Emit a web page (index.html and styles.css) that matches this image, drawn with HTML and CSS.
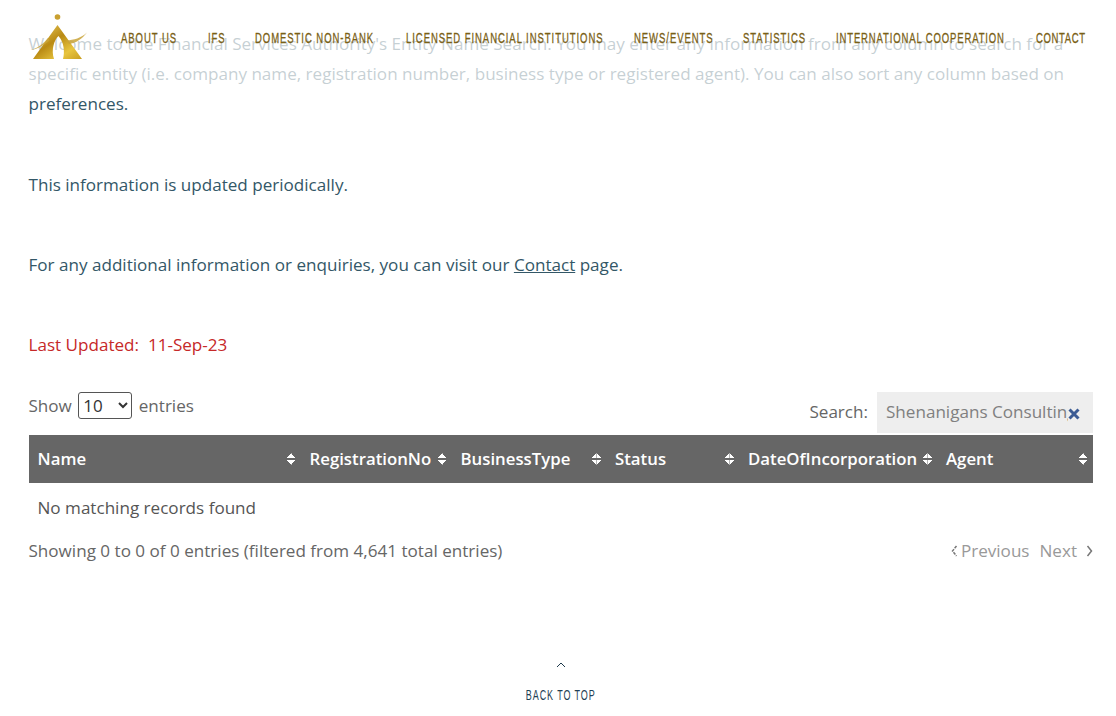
FILE: index.html
```html
<!DOCTYPE html>
<html lang="en">
<head>
<meta charset="utf-8">
<title>Entity Name Search</title>
<link rel="stylesheet" href="styles.css">
</head>
<body>
<header class="site-header">
  <a class="logo" href="#" aria-label="Financial Services Authority">
    <svg width="60" height="50" viewBox="0 0 60 50">
      <defs>
        <linearGradient id="gold" x1="0" y1="0" x2="1" y2="1">
          <stop offset="0" stop-color="#f3d668"/>
          <stop offset="0.45" stop-color="#b98a14"/>
          <stop offset="0.75" stop-color="#e8c53e"/>
          <stop offset="1" stop-color="#c99e20"/>
        </linearGradient>
      </defs>
      <circle cx="28.500" cy="5" r="2.800" fill="#c9a030"/>
      <path d="M28.500 13 L53 47 L34 47 C36 40 35 30 29.500 24 C25 28 22 38 25 47 L4 47 Z" fill="url(#gold)"/>
      <path d="M2 38 C9 36 15 31 19 26 L20.500 28.500 C15 33 9 37 2 38 Z" fill="#c9a338" opacity=".85"/>
      <path d="M58 20.500 C52 26 45 28 37 28.500 L40 32 C47 31 53 27 58 20.500 Z" fill="#c9a338" opacity=".85"/>
    </svg>
  </a>
  <nav class="main-nav">
    <a href="#">ABOUT US</a>
    <a href="#">IFS</a>
    <a href="#">DOMESTIC NON-BANK</a>
    <a href="#">LICENSED FINANCIAL INSTITUTIONS</a>
    <a href="#">NEWS/EVENTS</a>
    <a href="#">STATISTICS</a>
    <a href="#">INTERNATIONAL COOPERATION</a>
    <a href="#">CONTACT</a>
  </nav>
</header>
<main class="content">
  <p class="intro">Welcome to the Financial Services Authority's Entity Name Search. You may enter any information from any column to search for a specific entity (i.e. company name, registration number, business type or registered agent). You can also sort any column based on preferences.</p>
  <p class="note">This information is updated periodically.</p>
  <p class="note">For any additional information or enquiries, you can visit our <a href="#">Contact</a> page.</p>
  <p class="updated">Last Updated:&nbsp; 11-Sep-23</p>
  <div class="table-controls">
    <label class="length">Show
      <select><option>10</option><option>25</option><option>50</option></select>
      entries</label>
    <label class="search">Search:
      <span class="search-box"><span class="search-value">Shenanigans Consulting</span>
        <svg class="clear" width="12" height="12" viewBox="0 0 12 12"><path d="M1.500 1.500 L10.500 10.500 M10.500 1.500 L1.500 10.500" stroke="#3b5b94" stroke-width="3" fill="none"/></svg>
      </span>
    </label>
  </div>
  <table class="entities">
    <thead>
      <tr>
        <th>Name<span class="sort"></span></th>
        <th>RegistrationNo<span class="sort"></span></th>
        <th>BusinessType<span class="sort"></span></th>
        <th>Status<span class="sort"></span></th>
        <th>DateOfIncorporation<span class="sort"></span></th>
        <th>Agent<span class="sort"></span></th>
      </tr>
    </thead>
    <tbody>
      <tr><td colspan="6">No matching records found</td></tr>
    </tbody>
  </table>
  <div class="table-footer">
    <div>Showing 0 to 0 of 0 entries (filtered from 4,641 total entries)</div>
    <div class="pager">
      <svg width="7" height="12" viewBox="0 0 7 12"><path d="M5.500 1 L1.500 6 L5.500 11" fill="none" stroke="#777" stroke-width="1.500" stroke-dasharray="3 1"/></svg>
      <a href="#" class="prev">Previous</a>
      <a href="#" class="next">Next</a>
      <svg width="7" height="12" viewBox="0 0 7 12"><path d="M1.500 1 L5.500 6 L1.500 11" fill="none" stroke="#777" stroke-width="1.500"/></svg>
    </div>
  </div>
  <a class="back-top" href="#">
    <svg width="10" height="6" viewBox="0 0 10 6"><path d="M1 5 L5 1 L9 5" fill="none" stroke="#1e3a4c" stroke-width="1"/></svg>
    <span>BACK TO TOP</span>
  </a>
</main>
</body>
</html>
```
FILE: styles.css
```css
* { box-sizing: border-box; }
html, body { margin: 0; padding: 0; }
body {
  font-family: "Open Sans", "Liberation Sans", sans-serif;
  font-size: 17.08px;
  line-height: 30px;
  color: #335767;
  background: #fff;
  overflow: hidden;
}
.site-header {
  position: absolute;
  top: 0; left: 0; right: 0;
  height: 90px;
  background: rgba(255,255,255,.72);
  display: flex;
  align-items: flex-start;
}
.logo { display: block; margin: 12px 0 0 29px; width: 60px; height: 50px; }
.main-nav {
  position: absolute;
  top: 26px; left: 121px;
  display: flex;
  gap: 30px;
  font-family: "Liberation Sans", sans-serif;
  font-size: 9.500px;
  line-height: 24px;
  letter-spacing: .95px;
  white-space: nowrap;
}
.main-nav a {
  display: block;
  color: #7a5f16;
  text-decoration: none;
  -webkit-text-stroke: .2px #7a5f16;
  transform: scaleY(1.6);
}
.main-nav a:nth-child(1) { width: 57px; }
.main-nav a:nth-child(2) { width: 17px; }
.main-nav a:nth-child(3) { width: 121px; }
.main-nav a:nth-child(4) { width: 198px; }
.main-nav a:nth-child(5) { width: 79px; }
.main-nav a:nth-child(6) { width: 63px; }
.main-nav a:nth-child(7) { width: 170px; }
.main-nav a:nth-child(8) { width: 50px; letter-spacing: .65px; }
.main-nav a:nth-child(7) { letter-spacing: .87px; }
.content { padding: 29px 23px 0 28.500px; }
.content p { margin: 0; }
.intro { height: 90px; }
.note { margin-top: 51px !important; height: 30px; }
.note + .note { margin-top: 50px !important; }
.note a { color: #335767; text-decoration: underline; }
.updated { margin-top: 50px !important; color: #c62828; }
.table-controls {
  display: flex;
  justify-content: space-between;
  height: 42px;
  margin-top: 32px;
  color: #666;
}
.length { margin-top: -1px; }
.length select {
  font: 17px "Open Sans", sans-serif;
  color: #333;
  height: 27px;
  width: 54px;
  padding: 0;
  background: #fff;
  border: 1px solid #555;
  border-radius: 3px;
  margin: 0 2px;
}
.search { display: flex; gap: 9px; margin-top: 5px; line-height: 30px; }
.search-box {
  display: flex;
  align-items: center;
  width: 216px;
  height: 41px;
  padding: 0 13px 0 9px;
  margin-top: -5px;
  background: #eee;
  color: #808080;
  line-height: 39px;
  overflow: hidden;
}
.search-value { width: 182px; margin-top: -2px; overflow: hidden; white-space: nowrap; flex: none; }
.clear { flex: none; margin-top: 2px; }
.entities {
  width: 1064px;
  table-layout: fixed;
  border-collapse: collapse;
  margin-top: 1px;
}
.entities th {
  position: relative;
  height: 48px;
  padding: 0 0 0 9px;
  background: #666;
  color: #fff;
  font-size: 16.800px;
  font-weight: 600;
  text-align: left;
  white-space: nowrap;
}
.entities th:nth-child(1) { width: 272px; }
.entities th:nth-child(2) { width: 151px; }
.entities th:nth-child(3) { width: 154.500px; }
.entities th:nth-child(4) { width: 133px; }
.entities th:nth-child(5) { width: 198px; }
.entities th:nth-child(6) { width: 155.500px; }
.sort {
  position: absolute;
  right: 5px; top: 18px;
  width: 9px; height: 12px;
  background:
    linear-gradient(to top left, #fff 50%, transparent 50%) left 0/50% 5px no-repeat,
    linear-gradient(to top right, #fff 50%, transparent 50%) right 0/50% 5px no-repeat,
    linear-gradient(to bottom left, #fff 50%, transparent 50%) left 7px/50% 5px no-repeat,
    linear-gradient(to bottom right, #fff 50%, transparent 50%) right 7px/50% 5px no-repeat;
}
.entities td { padding: 10px 9px; color: #555; height: 50px; }
.table-footer {
  display: flex;
  justify-content: space-between;
  margin-top: 3px;
  color: #666;
}
.pager { display: flex; align-items: center; gap: 3px; color: #888; }
.pager a { color: #999; text-decoration: none; }
.pager .next { margin: 0 6px 0 7px; }
.back-top {
  display: flex;
  flex-direction: column;
  align-items: center;
  margin: 96px auto 0;
  width: 120px;
  text-decoration: none;
  color: #1f3f55;
  font-family: "Liberation Sans", sans-serif;
  font-size: 9px;
  letter-spacing: .9px;
  line-height: 20px;
}
.back-top span { margin-top: 17px; transform: scaleY(1.6); }
```
